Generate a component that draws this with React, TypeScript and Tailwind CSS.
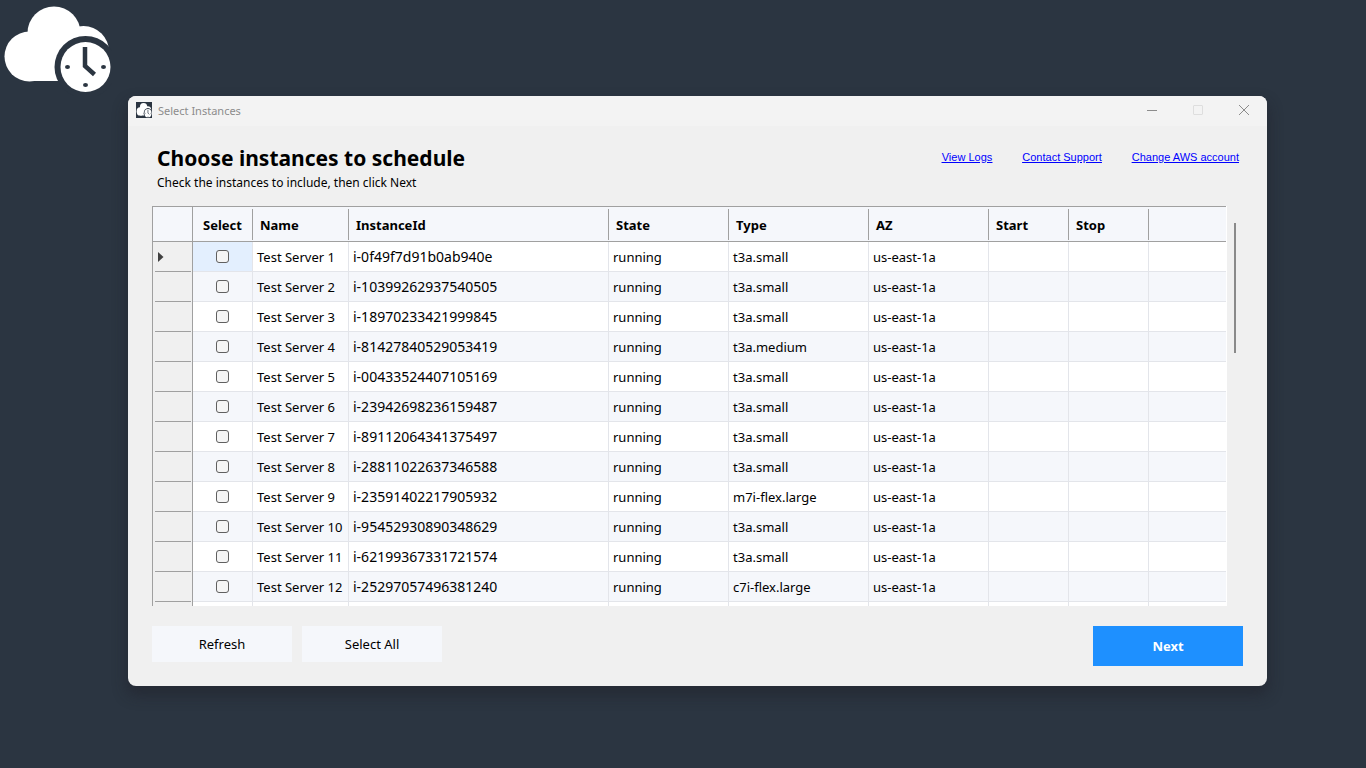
const instances = [
  { name: "Test Server 1", id: "i-0f49f7d91b0ab940e", type: "t3a.small" },
  { name: "Test Server 2", id: "i-10399262937540505", type: "t3a.small" },
  { name: "Test Server 3", id: "i-18970233421999845", type: "t3a.small" },
  { name: "Test Server 4", id: "i-81427840529053419", type: "t3a.medium" },
  { name: "Test Server 5", id: "i-00433524407105169", type: "t3a.small" },
  { name: "Test Server 6", id: "i-23942698236159487", type: "t3a.small" },
  { name: "Test Server 7", id: "i-89112064341375497", type: "t3a.small" },
  { name: "Test Server 8", id: "i-28811022637346588", type: "t3a.small" },
  { name: "Test Server 9", id: "i-23591402217905932", type: "m7i-flex.large" },
  { name: "Test Server 10", id: "i-95452930890348629", type: "t3a.small" },
  { name: "Test Server 11", id: "i-62199367331721574", type: "t3a.small" },
  { name: "Test Server 12", id: "i-25297057496381240", type: "c7i-flex.large" },
];

const headers = ["Name", "InstanceId", "State", "Type", "AZ", "Start", "Stop"];

function Logo({ className, viewBox = "0 0 112 96" }: { className: string; viewBox?: string }) {
  return (
    <svg viewBox={viewBox} preserveAspectRatio="none" className={className} aria-hidden="true">
      <g fill="#fff">
        <circle cx="29.5" cy="56.5" r="25" />
        <circle cx="54" cy="33" r="26.5" />
        <circle cx="83.5" cy="51.5" r="25.5" />
        <path d="M29 36h54v45H29z" />
      </g>
      <circle cx="85.5" cy="67" r="31" fill="#2b3541" />
      <circle cx="85.5" cy="67" r="25" fill="#fff" />
      <path d="M85 47v19l9.5 8.5" fill="none" stroke="#2b3541" strokeWidth="4.5" />
      <g fill="#2b3541">
        <ellipse cx="67.5" cy="67" rx="2.5" ry="2" />
        <ellipse cx="103.5" cy="67" rx="2.5" ry="2" />
        <ellipse cx="85.5" cy="85" rx="2.5" ry="2" />
      </g>
    </svg>
  );
}

function TitleBar() {
  return (
    <div className="flex h-[30px] items-center bg-[#f3f3f3] pl-2 text-[#8c8c8c]">
      <span className="mb-[2px] size-4 bg-[#2b3541]">
        <Logo className="size-4" viewBox="0 0 114 96" />
      </span>
      <span className="ml-[6px] text-[11px]">Select Instances</span>
      <div className="mb-[2px] ml-auto flex">
        <button aria-label="Minimize" className="flex w-[46px] justify-center">
          <svg viewBox="0 0 10 10" className="size-[10px]" fill="none" stroke="currentColor">
            <path d="M0 5.5h10" />
          </svg>
        </button>
        <button aria-label="Maximize" disabled className="flex w-[46px] justify-center text-[#dedede]">
          <svg viewBox="0 0 10 10" className="size-[10px]" fill="none" stroke="currentColor">
            <rect x="0.5" y="0.5" width="9" height="9" rx="0.5" />
          </svg>
        </button>
        <button aria-label="Close" className="flex w-[46px] justify-center">
          <svg viewBox="0 0 10 10" className="size-[10px]" fill="none" stroke="currentColor">
            <path d="M0 0l10 10M10 0L0 10" />
          </svg>
        </button>
      </div>
    </div>
  );
}

function InstanceTable() {
  const cell = "overflow-hidden border-r border-b border-[#e3e5ea] px-1 py-0 leading-4";
  return (
    <table className="w-full table-fixed border-separate border-spacing-0 whitespace-nowrap border-r border-white text-left text-[13px]">
      <colgroup>
        <col className="w-[41px]" />
        <col className="w-[60px]" />
        <col className="w-[96px]" />
        <col className="w-[260px]" />
        <col className="w-[120px]" />
        <col className="w-[140px]" />
        <col className="w-[120px]" />
        <col className="w-[80px]" />
        <col className="w-[80px]" />
        <col />
      </colgroup>
      <thead>
        <tr className="h-9 bg-[#f5f7fb]">
          <td className="border border-[#a0a0a0]" />
          <th className="border-y border-[#a0a0a0] p-0 text-center">
            <div className="flex h-[31px] items-center justify-center border-r border-[#a0a0a0] pt-[3px]">Select</div>
          </th>
          {headers.map((h) => (
            <th key={h} className="border-y border-[#a0a0a0] p-0">
              <div className="flex h-[31px] items-center border-r border-[#a0a0a0] pt-[3px] pl-[7px]">{h}</div>
            </th>
          ))}
          <td className="border-y border-[#a0a0a0]" />
        </tr>
      </thead>
      <tbody>
        {instances.map((row, i) => (
          <tr key={row.id} className="h-[30px] odd:bg-white even:bg-[#f5f7fb]">
            <td className="border-x border-[#a0a0a0] bg-[#f0f0f0] py-0 pr-px pl-[2px]">
              <div className="flex h-[30px] items-center border-b border-[#a0a0a0] pl-[3px]">
                {i === 0 && (
                  <svg viewBox="0 0 6 10" className="h-[10px] w-[6px]" fill="#404040" aria-hidden="true">
                    <path d="M0 0l5.5 5L0 10z" />
                  </svg>
                )}
              </div>
            </td>
            <td className={i === 0 ? "border-r border-b border-[#e3e5ea] bg-[#e3effe] p-0" : "border-r border-b border-[#e3e5ea] p-0"}>
              <div className="flex justify-center">
                <input
                  type="checkbox"
                  aria-label={`Select ${row.name}`}
                  className="size-[13px] appearance-none rounded-[3px] border border-[#606060] bg-[#f5f5f5] checked:bg-[#1e90ff]"
                />
              </div>
            </td>
            <td className={cell}>{row.name}</td>
            <td className={cell}>
              <span className="text-[14px] leading-4">{row.id}</span>
            </td>
            <td className={cell}>running</td>
            <td className={cell}>{row.type}</td>
            <td className={cell}>us-east-1a</td>
            <td className={cell} />
            <td className={cell} />
            <td className="border-b border-[#e3e5ea]" />
          </tr>
        ))}
        <tr className="h-[30px] bg-white">
          <td className="border-x border-[#a0a0a0] bg-[#f0f0f0]" />
          {["Select", ...headers].map((h) => (
            <td key={h} className="border-r border-[#e3e5ea]" />
          ))}
          <td />
        </tr>
      </tbody>
    </table>
  );
}

export default function App() {
  return (
    <div className="flex min-h-screen items-start bg-[#2b3541] font-['Noto_Sans','Open_Sans',sans-serif] text-black">
      <Logo className="w-28 shrink-0" />
      <main className="mt-24 mr-[99px] ml-4 min-w-0 flex-1 overflow-hidden rounded-lg bg-[#f0f0f0] shadow-[0_8px_14px_2px_rgba(30,30,40,0.45)]">
        <TitleBar />
        <div className="px-6 pt-[17px] pb-5">
          <header className="flex justify-between pr-1 pl-[5px]">
            <div>
              <h1 className="text-[21px] leading-[30px] font-bold">Choose instances to schedule</h1>
              <p className="text-xs leading-5">Check the instances to include, then click Next</p>
            </div>
            <nav className="flex gap-[30px] pt-[6px] font-['Liberation_Sans',sans-serif] text-[11px] text-[#0000ff] underline">
              <a href="#logs">View Logs</a>
              <a href="#support">Contact Support</a>
              <a href="#account">Change AWS account</a>
            </nav>
          </header>
          <div className="mt-[13px] flex h-[400px] overflow-hidden">
            <div className="min-w-0 flex-1">
              <InstanceTable />
            </div>
            <div className="w-4 pt-[17px] pl-[7px]">
              <div className="h-[130px] w-[2px] bg-[#8a8a8a]" />
            </div>
          </div>
          <footer className="mt-5 flex items-start gap-[10px] text-[13px]">
            <button className="h-9 w-[140px] bg-[#f5f7fb] pt-[2px]">Refresh</button>
            <button className="h-9 w-[140px] bg-[#f5f7fb] pt-[2px]">Select All</button>
            <button className="ml-auto h-10 w-[150px] bg-[#1e90ff] pt-[2px] font-bold text-white">Next</button>
          </footer>
        </div>
      </main>
    </div>
  );
}
